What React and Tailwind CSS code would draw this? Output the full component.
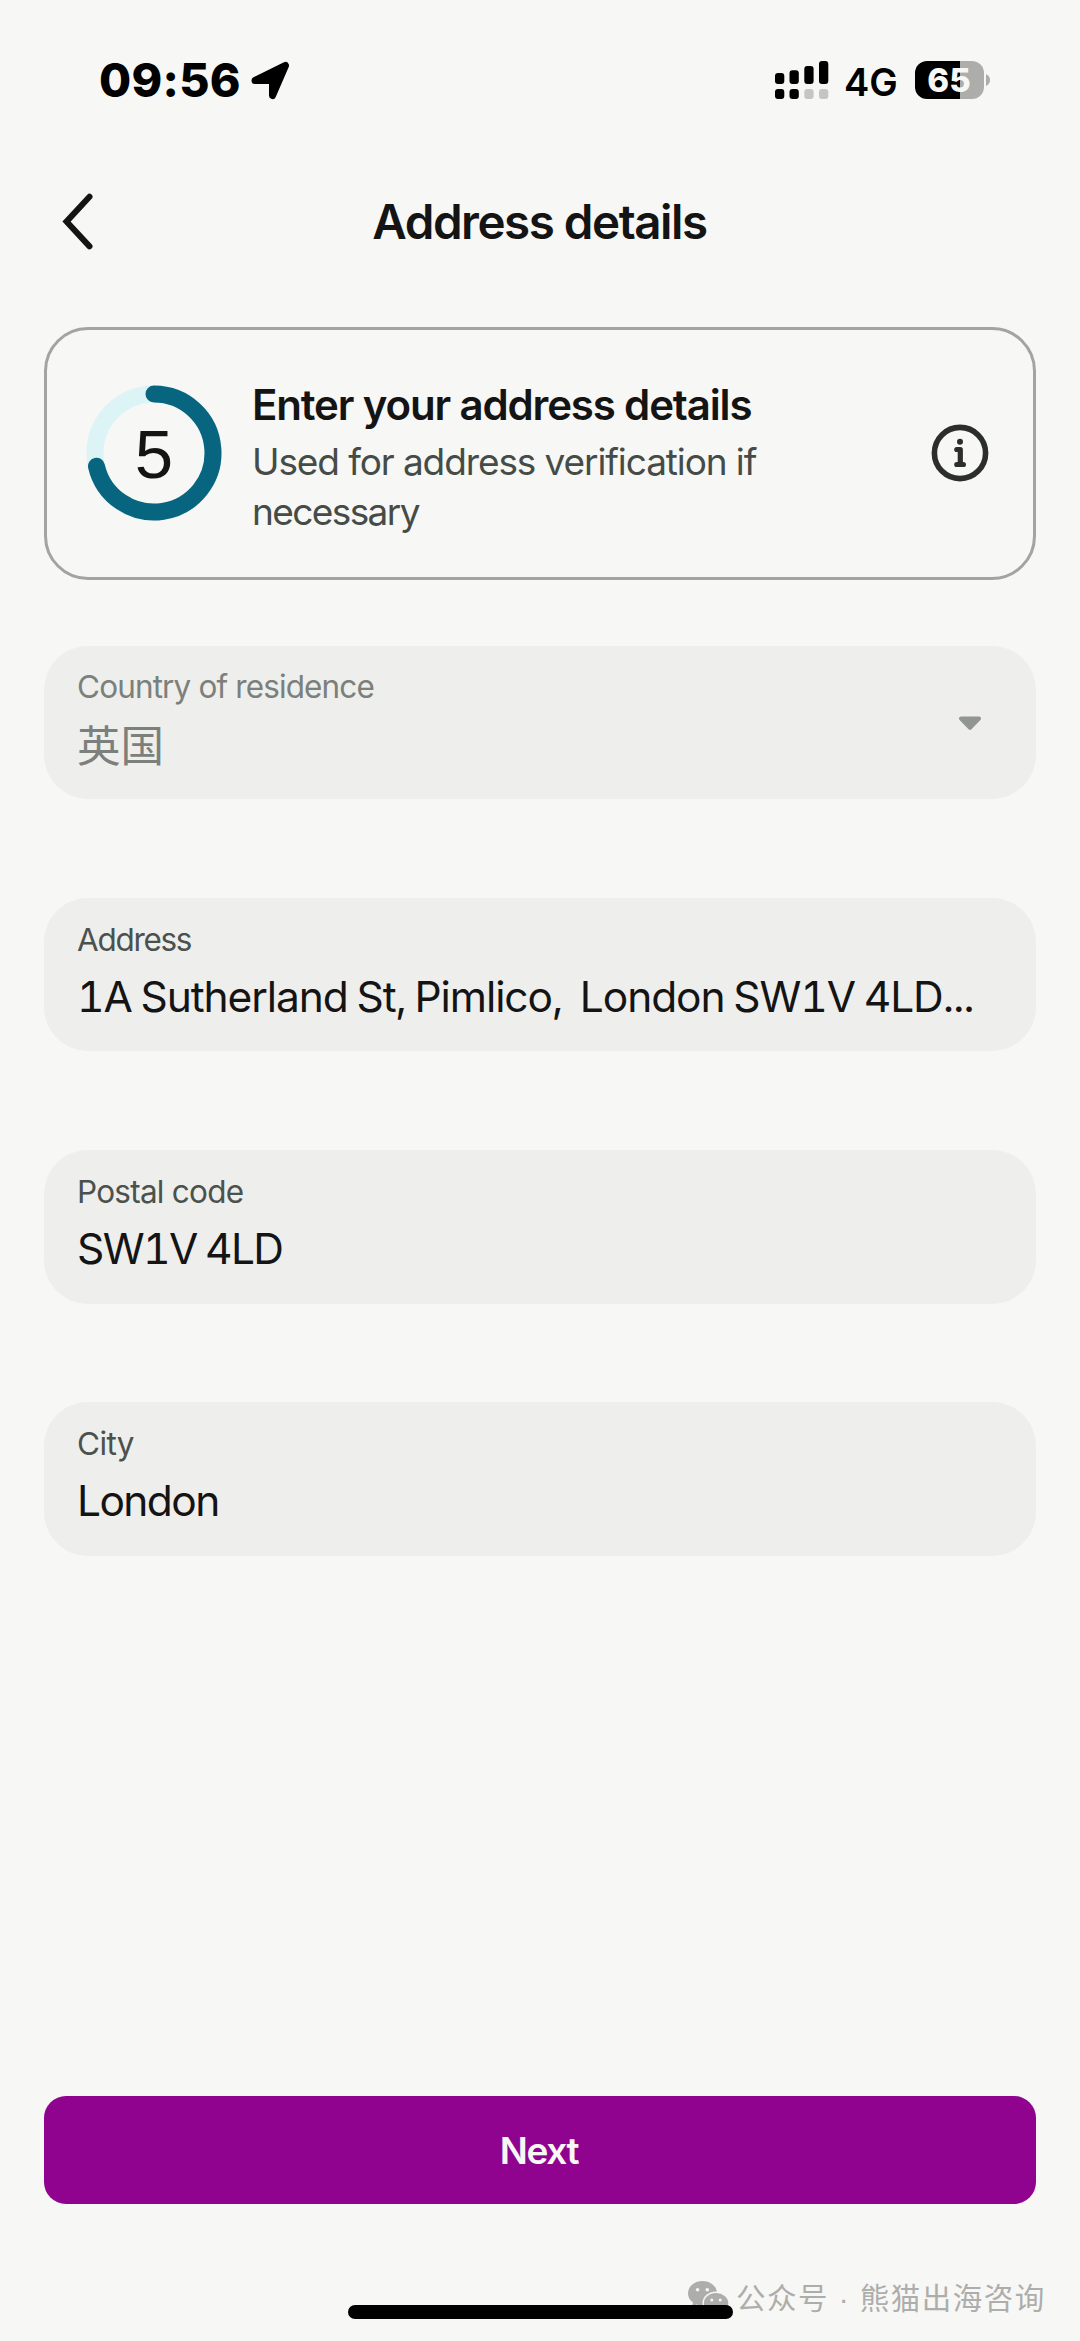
const fields = [
    { label: 'Address', value: '1A Sutherland St, Pimlico,\u00a0 London SW1V 4LD...', tracking: 'tracking-[-1.1px] [word-spacing:-1.5px]', labelTracking: 'tracking-[-1.3px]' },
    { label: 'Postal code', value: 'SW1V 4LD', tracking: 'tracking-[-1.6px] [word-spacing:-1.5px]', labelTracking: 'tracking-[-0.75px]' },
    { label: 'City', value: 'London', tracking: 'tracking-[-1.6px]', labelTracking: 'tracking-[-0.6px]' },
];

const StatusBar = () => (
    <div className="flex h-[160px] items-center justify-between pl-[99px] pr-[89px] text-black">
        <div className="flex items-center">
            <span className="w-[143px] pt-[1px] text-[46.5px] font-extrabold leading-none tracking-[0.3px]">09:56</span>
            <svg className="ml-[8px]" width="42" height="42" viewBox="0 0 42 42">
                <path d="M5 21.5 35.5 6.5 22.5 36.5V21.5Z" fill="black" stroke="black" strokeWidth="7" strokeLinejoin="round" />
            </svg>
        </div>
        <div className="flex items-center">
            <svg width="54" height="38" viewBox="0 0 54 38">
                <rect x="0" y="12" width="9.3" height="11" rx="3" />
                <rect x="14.5" y="9.3" width="9.3" height="13.7" rx="3" />
                <rect x="29.3" y="5" width="9.3" height="18" rx="3" />
                <rect x="44" y="0" width="9.3" height="23" rx="3" />
                <rect x="0" y="28" width="9.3" height="10" rx="3" />
                <rect x="14.5" y="28" width="9.3" height="10" rx="3" />
                <rect x="29.3" y="28" width="9.3" height="10" rx="3" fill="#c5c5c4" />
                <rect x="44" y="28" width="9.3" height="10" rx="3" fill="#c5c5c4" />
            </svg>
            <span className="ml-[15px] w-[56px] pt-[3px] text-[38px] font-semibold leading-none">4G</span>
            <div className="ml-[15px] flex h-[38px] w-[69px] items-center justify-center rounded-[12px] bg-[linear-gradient(90deg,#000_45px,#adadac_45px)] pr-[1px] text-[33px] font-extrabold leading-none text-[#f7f7f5]">
                65
            </div>
            <svg className="ml-[2px]" width="5" height="12" viewBox="0 0 5 12">
                <path d="M0 0Q4 2 4 6T0 12Z" fill="#adadac" />
            </svg>
        </div>
    </div>
);

const Header = () => (
    <div className="grid h-[124px] grid-cols-[120px_1fr_120px] items-center">
        <svg className="ml-[60px]" width="36" height="60" viewBox="0 0 36 60" fill="none">
            <path d="M29.5 4.8 6.5 29.6 29.5 54.4" stroke="#141414" strokeWidth="6" strokeLinecap="round" strokeLinejoin="miter" />
        </svg>
        <h1 className="pr-px text-center text-[47.5px] font-semibold tracking-[-1.45px]">Address details</h1>
    </div>
);

const StepCard = () => (
    <section className="mt-[43px] flex h-[253px] items-center rounded-[44px] border-3 border-[#a3a3a1] pl-[39px] pr-[43px]">
        <div className="mb-[2px] grid size-[136px] shrink-0 place-items-center *:[grid-area:1/1]">
            <svg width="136" height="136" viewBox="0 0 136 136" fill="none">
                <circle cx="68" cy="68" r="59" stroke="#dcf4f6" strokeWidth="17" />
                <path d="M68 9A59 59 0 1 1 10.5 81.3" stroke="#07657f" strokeWidth="17" strokeLinecap="round" />
            </svg>
            <span className="pt-[3px] font-['Liberation_Sans',sans-serif] text-[69px] leading-none">5</span>
        </div>
        <div className="ml-[30px] flex-1 pt-[4px]">
            <h2 className="whitespace-nowrap text-[42px] font-semibold leading-[60px] tracking-[-1.15px]">Enter your address details</h2>
            <p className="w-[560px] pt-[2px] text-[37px] leading-[50px] tracking-[-1.1px] text-[#454b47]">
                Used for address verification if<br /><span className="tracking-[-1.6px]">necessary</span>
            </p>
        </div>
        <svg className="mb-[2px]" width="60" height="60" viewBox="0 0 60 60" fill="none">
            <circle cx="30" cy="30" r="25.6" stroke="#2c2e2c" strokeWidth="5.6" />
            <circle cx="30" cy="18.8" r="3" fill="#2c2e2c" />
            <path d="M26.8 26.5H30.3V41.5M26.8 41.5H33.4" stroke="#2c2e2c" strokeWidth="5.2" strokeLinecap="round" strokeLinejoin="round" />
        </svg>
    </section>
);

const Field = ({ label, value, tracking, labelTracking }) => (
    <div className="h-[153.4px] rounded-[44px] bg-[#eeeeec] px-[33px] pt-[20.5px]">
        <div className={`text-[31.5px] leading-[42px] text-[#4b514d] ${labelTracking}`}>{label}</div>
        <div className={`mt-[8px] whitespace-nowrap text-[42.5px] leading-[56px] tabular-nums ${tracking}`}>{value}</div>
    </div>
);

const WeChatIcon = () => (
    <svg width="42" height="34" viewBox="0 0 42 34">
        <path d="M14.5 0C6.5 0 0 5.4 0 12.4c0 3.8 2 7 5 9.2L3.8 26l5-2.6c2 .6 3.6.8 5.7.8C22.5 24.2 29 19 29 12.2S22.5 0 14.5 0Z" fill="#adadac" />
        <path d="M28 11.2c-7 0-12.8 4.8-12.8 11S21 33 28 33c1.7 0 3.3-.2 4.7-.7l4.3 2-1-3.6c3-2 5-5 5-8.5 0-6.2-6-11-13-11Z" fill="#adadac" stroke="#f7f7f5" strokeWidth="1.4" />
        <circle cx="9.6" cy="8.7" r="1.8" fill="#f7f7f5" />
        <circle cx="19.3" cy="8.7" r="1.8" fill="#f7f7f5" />
        <circle cx="23.8" cy="19" r="1.5" fill="#f7f7f5" />
        <circle cx="32.2" cy="19" r="1.5" fill="#f7f7f5" />
    </svg>
);

const App = () => {
    return (
        <div className="relative flex h-[2341px] w-[1080px] flex-col overflow-hidden bg-[#f7f7f5] font-['Inter','Noto_Sans_CJK_SC',sans-serif] text-[#141414]">
            <StatusBar />
            <Header />
            <main className="flex flex-1 flex-col px-[44px]">
                <StepCard />
                <div className="mt-[66px] flex flex-col gap-[98.7px]">
                    <div className="flex h-[153.4px] items-center justify-between rounded-[44px] bg-[#eeeeec] pl-[33px] pr-[54px] text-[#7b807c]">
                        <div className="h-full pt-[20px]">
                            <div className="text-[31.5px] leading-[42px] tracking-[-0.87px]">Country of residence</div>
                            <div className="mt-[10px] text-[43.5px] leading-[56px]">英国</div>
                        </div>
                        <svg width="24" height="16" viewBox="0 0 24 16">
                            <path d="M3 3.5H21L12 12.8Z" fill="#919691" stroke="#919691" strokeWidth="4" strokeLinejoin="round" />
                        </svg>
                    </div>
                    {fields.map((field) => (
                        <Field key={field.label} {...field} />
                    ))}
                </div>
                <button className="mb-[137px] mt-auto h-[108px] rounded-[22px] bg-[#90038f] pr-[2px] pt-[2px] text-[37px] font-semibold tracking-[-1.3px] text-[#f7f7f5]">
                    Next
                </button>
            </main>
            <div className="absolute bottom-[22px] left-[348px] z-10 h-[14px] w-[385px] rounded-full bg-black" />
            <div className="absolute bottom-[22px] left-[688px] flex items-center whitespace-nowrap text-[#adadac]">
                <WeChatIcon />
                <span className="ml-[6px] font-['Noto_Sans_CJK_SC',sans-serif] text-[29.5px] leading-[40px] tracking-[1.5px]">
                    公众号<span className="font-['Liberation_Sans',sans-serif]"> · </span>熊猫出海咨询
                </span>
            </div>
        </div>
    );
};

export default App;
